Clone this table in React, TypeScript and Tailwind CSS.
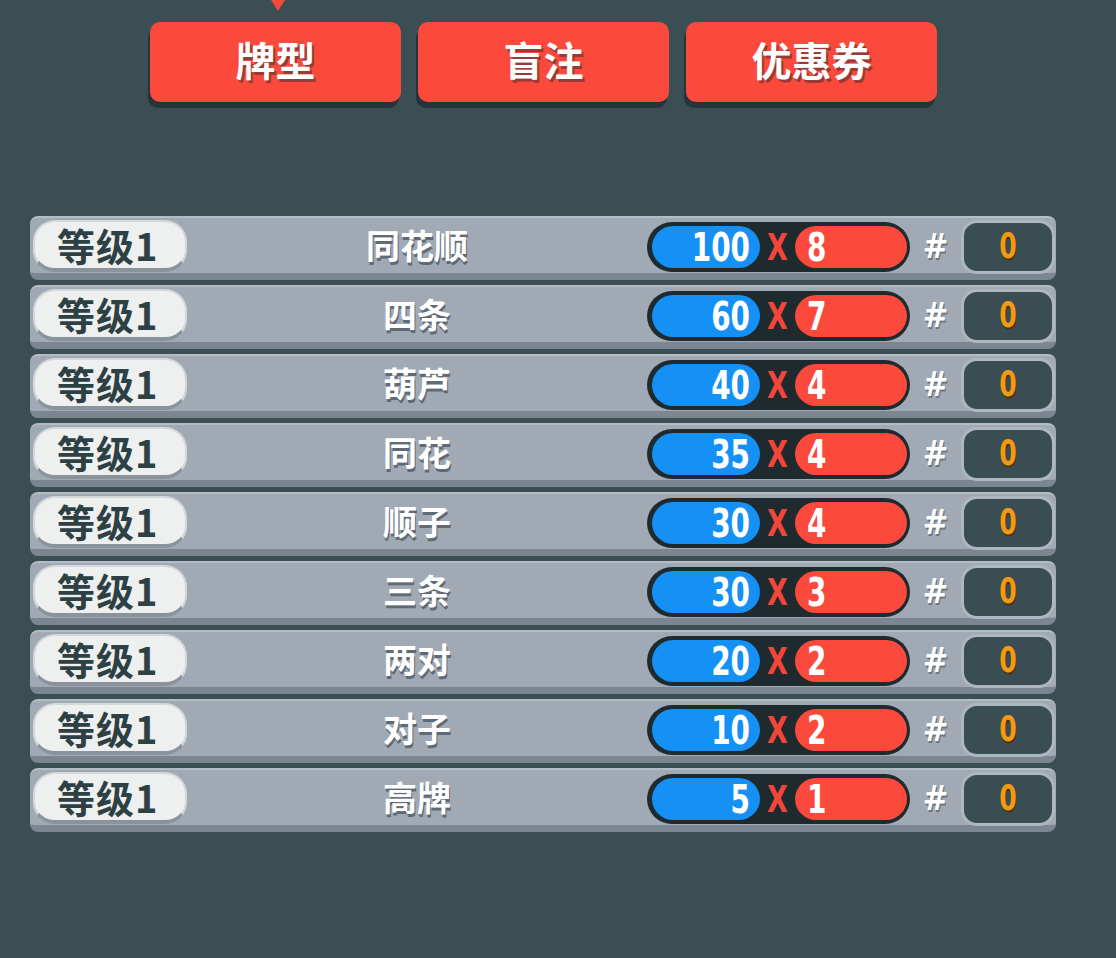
const tabs = ['牌型', '盲注', '优惠券']

interface HandRow {
  name: string
  chips: number
  mult: number
}

const hands: HandRow[] = [
  { name: '同花顺', chips: 100, mult: 8 },
  { name: '四条', chips: 60, mult: 7 },
  { name: '葫芦', chips: 40, mult: 4 },
  { name: '同花', chips: 35, mult: 4 },
  { name: '顺子', chips: 30, mult: 4 },
  { name: '三条', chips: 30, mult: 3 },
  { name: '两对', chips: 20, mult: 2 },
  { name: '对子', chips: 10, mult: 2 },
  { name: '高牌', chips: 5, mult: 1 },
]

const cjk = "font-['Noto_Sans_CJK_SC','Noto_Sans',sans-serif]"
const num = "font-['DejaVu_Sans_Condensed','DejaVu_Sans',sans-serif]"

function Row({ hand }: { hand: HandRow }) {
  return (
    <div className="flex items-start w-[1026px] h-[64px] mb-[5px] rounded-[8px] bg-[#a1aab4] border-t-2 border-t-[#b4bcc5] border-b-[7px] border-b-[#7c8690] pl-[3px] pr-[1px] pt-[2px]">
      {/* level pill */}
      <div className="w-[154px] h-[52px] rounded-[22px] bg-[#eef0ef] border-2 border-[#d3d8dc] border-b-[4px] border-b-[#8a939c] flex items-center pl-[22px]">
        <span className={`${cjk} text-[38px] font-bold leading-none tracking-[1px] text-[#2d4145]`}>等级1</span>
      </div>

      <div className="flex-1 h-[50px] flex items-center justify-center">
        <span className={`${cjk} text-[34px] font-bold leading-none text-white [text-shadow:1px_3px_0_#5f6a74]`}>
          {hand.name}
        </span>
      </div>

      {/* chips x mult */}
      <div className="w-[263px] h-[50px] rounded-full bg-[#1e2a2e] flex items-center pl-[5px] pr-[3px] mt-[2px]">
        <div className="w-[108px] h-[42px] rounded-full bg-[#1590f4] flex items-center justify-end pr-[10px]">
          <span className={`${num} inline-block scale-y-125 text-[31px] font-bold leading-none text-white`}>{hand.chips}</span>
        </div>
        <div className="w-[35px] flex justify-center">
          <span className={`${num} inline-block scale-y-125 text-[30px] font-bold leading-none text-[#f2463a]`}>X</span>
        </div>
        <div className="flex-1 h-[42px] rounded-full bg-[#fb4a3c] flex items-center pl-[12px]">
          <span className={`${num} inline-block scale-y-125 text-[31px] font-bold leading-none text-white`}>{hand.mult}</span>
        </div>
      </div>

      <div className="w-[51px] h-[52px] flex items-center justify-center">
        <span className={`${num} text-[34px] font-bold leading-none text-white [text-shadow:1px_2px_0_#6b7580]`}>#</span>
      </div>

      <div className="w-[94px] h-[54px] rounded-[16px] bg-[#3a4d52] border-[3px] border-[#aeb7bf] flex items-center justify-center">
        <span className={`${num} inline-block scale-y-125 text-[28px] font-bold leading-none text-[#f39a12] [text-shadow:1px_1px_0_#4a3410]`}>0</span>
      </div>
    </div>
  )
}

export default function App() {
  return (
    <div className="w-[1116px] h-[958px] bg-[#3a4e53] overflow-hidden">
      <div className="h-[22px] pl-[271px]">
        <div className="w-0 h-0 border-l-[7px] border-r-[7px] border-t-[11px] border-l-transparent border-r-transparent border-t-[#f44a3c]" />
      </div>

      <div className="flex gap-[17px] pl-[150px]">
        {tabs.map((t) => (
          <div
            key={t}
            className="w-[251px] h-[80px] rounded-[10px] bg-[#fb4a3c] shadow-[-2px_6px_0_#25353a] flex items-center justify-center pb-[6px]"
          >
            <span className={`${cjk} text-[40px] font-bold leading-none text-white [text-shadow:2px_3px_0_#9b3a34]`}>{t}</span>
          </div>
        ))}
      </div>

      <div className="mt-[114px] pl-[30px]">
        {hands.map((h) => (
          <Row key={h.name} hand={h} />
        ))}
      </div>
    </div>
  )
}
